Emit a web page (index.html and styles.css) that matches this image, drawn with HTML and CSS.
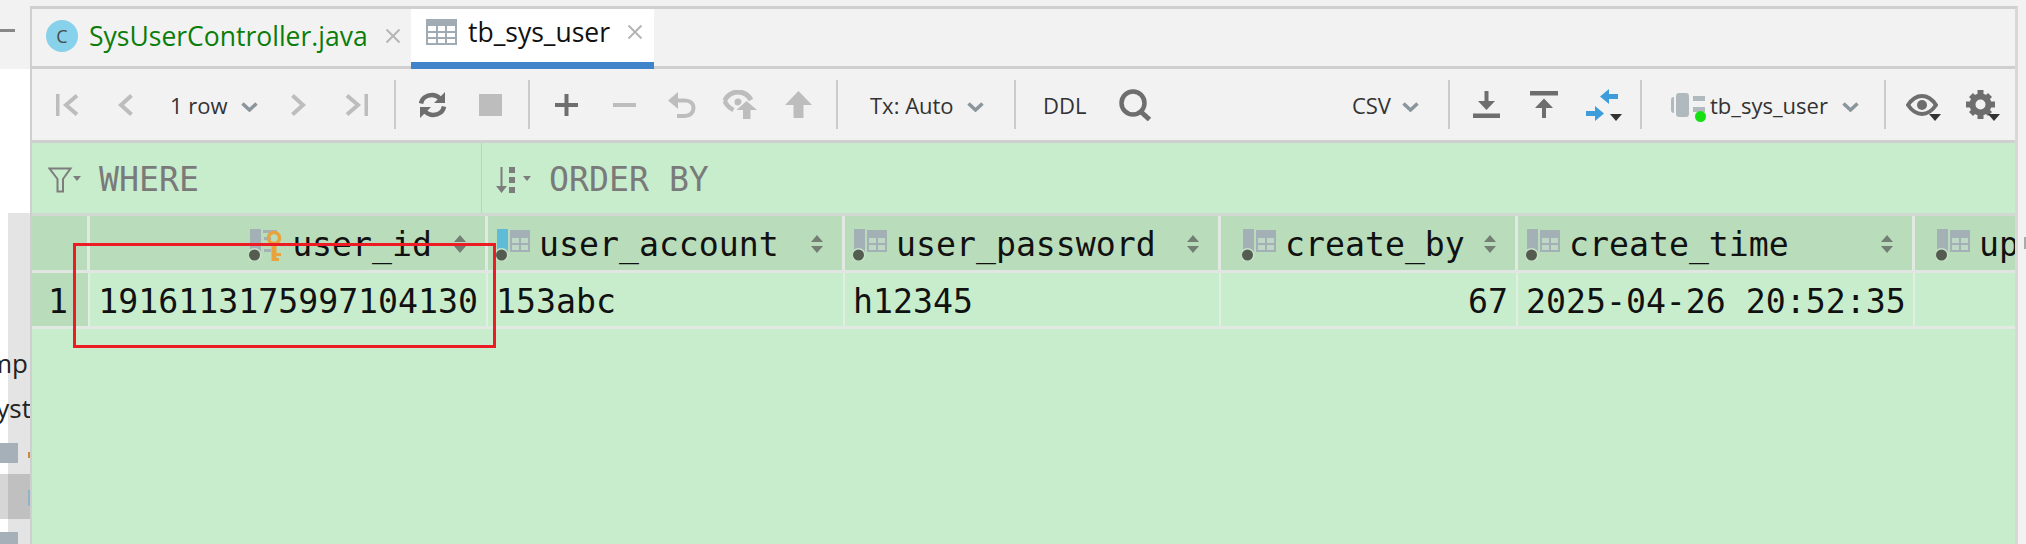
FILE: index.html
```html
<!DOCTYPE html>
<html lang="en">
<head>
    <meta charset="UTF-8" />
    <title>tb_sys_user</title>
    <link rel="stylesheet" href="styles.css">
</head>
<body>
    <svg class="defs" width="0" height="0">
        <symbol id="col-icon" viewBox="0 0 34 32">
            <rect x="1" y="0" width="11" height="24" class="col-bar"/>
            <path d="M14 1h20v22H14z" fill="#a3b0b5"/>
            <path d="M16 9h7v5h-7zM25 9h7v5h-7zM16 16h7v5h-7zM25 16h7v5h-7z" fill="#bfd8c6"/>
            <circle cx="5.500" cy="26" r="7" fill="#c8e3cb"/>
            <circle cx="5.500" cy="26" r="5.500" fill="#545c4f"/>
        </symbol>
        <symbol id="close" viewBox="0 0 16 16">
            <path d="M1.500 1.500l13 13M14.500 1.500l-13 13" stroke="#b5b5b5" stroke-width="2" fill="none"/>
        </symbol>
        <symbol id="chev" viewBox="0 0 17 10">
            <path d="M1.500 1.500l7 6.500 7-6.500" stroke="#8b959c" stroke-width="3.500" fill="none"/>
        </symbol>
        <symbol id="sort" viewBox="0 0 12 18">
            <path d="M6 0l6 7H0zM0 11h12l-6 7z" fill="#727f72"/>
        </symbol>
    </svg>

    <div class="app">
        <aside class="side">
            <div class="side-top"><span class="side-dash"></span></div>
            <div class="side-blank"></div>
            <div class="side-list">
                <div class="side-text side-text-a">mp</div>
                <div class="side-text side-text-b">yst</div>
                <div class="side-node side-node-a"><span class="fleck fleck-orange"></span></div>
                <div class="side-selected"><span class="fleck fleck-blue"></span></div>
                <div class="side-node side-node-b"></div>
            </div>
        </aside>

        <main class="editor">
            <div class="tabs">
                <div class="tab">
                    <span class="class-icon">C</span>
                    <span class="tab-name tab-java">SysUserController.java</span>
                    <svg class="tab-close"><use href="#close"/></svg>
                </div>
                <div class="tab tab-active">
                    <svg class="table-icon" viewBox="0 0 31 26">
                        <rect width="31" height="26" fill="#a0abb4"/>
                        <path d="M2 7h8v5H2zM12 7h7v5h-7zM21 7h8v5h-8zM2 14h8v4H2zM12 14h7v4h-7zM21 14h8v4h-8zM2 20h8v4H2zM12 20h7v4h-7zM21 20h8v4h-8z" fill="#fff"/>
                    </svg>
                    <span class="tab-name">tb_sys_user</span>
                    <svg class="tab-close"><use href="#close"/></svg>
                </div>
            </div>

            <div class="toolbar">
                <div class="tool"><svg width="23" height="22" viewBox="0 0 23 22"><rect width="3.500" height="22" fill="#bdbdbd"/><path d="M21 1.500L10 11l11 9.500" class="ln-off"/></svg></div>
                <div class="tool"><svg width="15" height="22" viewBox="0 0 15 22"><path d="M13.500 1.500L3 11l10.500 9.500" class="ln-off"/></svg></div>
                <div class="picker picker-rows"><span>1 row</span><svg class="chev"><use href="#chev"/></svg></div>
                <div class="tool"><svg width="15" height="22" viewBox="0 0 15 22"><path d="M1.500 1.500L12 11 1.500 20.500" class="ln-off"/></svg></div>
                <div class="tool"><svg width="23" height="22" viewBox="0 0 23 22"><rect x="19.500" width="3.500" height="22" fill="#bdbdbd"/><path d="M2 1.500L13 11 2 20.500" class="ln-off"/></svg></div>
                <span class="sep"></span>
                <div class="tool"><svg width="29" height="26" viewBox="0 0 29 26"><path d="M3 11.500C4 6 8.500 3 14 3c3.500 0 6 1.500 8 3.500" class="ln-on"/><path d="M26 14.500C25 20 20.500 23 15 23c-3.500 0-6-1.500-8-3.500" class="ln-on"/><path d="M27 0v11H16zM2 26V15h11z" fill="#6e6e6e"/></svg></div>
                <div class="tool"><svg width="23" height="22"><rect width="23" height="22" fill="#bdbdbd"/></svg></div>
                <span class="sep"></span>
                <div class="tool"><svg width="23" height="22" viewBox="0 0 23 22"><path d="M9.500 0h4v9H23v4h-9.500v9h-4v-9H0V9h9.500z" fill="#6e6e6e"/></svg></div>
                <div class="tool"><svg width="23" height="4"><rect width="23" height="4" fill="#bdbdbd"/></svg></div>
                <div class="tool"><svg width="28" height="26" viewBox="0 0 28 26"><path d="M0 8.500L10 0v17z" fill="#bdbdbd"/><path d="M8 8.500h9c5 0 8.500 3 8.500 7.500s-3.500 8-8.500 8H9" class="ln-off"/></svg></div>
                <div class="tool"><svg width="35" height="29" viewBox="0 0 35 29"><path d="M1.500 11C4 5.500 9.500 2 15 2s10 2.500 13 8" stroke="#bdbdbd" stroke-width="5" fill="none"/><path d="M1.500 11c2 4 5 7 9 9" stroke="#bdbdbd" stroke-width="4.500" fill="none"/><circle cx="15" cy="12" r="3.500" fill="#bdbdbd"/><path d="M23 9l12 11h-7v9h-10v-9h-7z" fill="#f2f2f2"/><path d="M23.500 11L34 20h-6.500v9h-7.500v-9h-6.500z" fill="#bdbdbd"/></svg></div>
                <div class="tool"><svg width="27" height="27" viewBox="0 0 27 27"><path d="M13.500 0L27 14h-8.500v13h-10V14H0z" fill="#bdbdbd"/></svg></div>
                <span class="sep"></span>
                <div class="picker picker-tx"><span>Tx: Auto</span><svg class="chev"><use href="#chev"/></svg></div>
                <span class="sep"></span>
                <div class="picker picker-ddl"><span>DDL</span></div>
                <div class="tool"><svg width="33" height="32" viewBox="0 0 33 32"><circle cx="14" cy="14" r="11.500" stroke="#6e6e6e" stroke-width="4.500" fill="none"/><path d="M21 22l9.500 8.500" stroke="#6e6e6e" stroke-width="5" fill="none"/></svg></div>

                <div class="picker picker-csv"><span>CSV</span><svg class="chev"><use href="#chev"/></svg></div>
                <span class="sep"></span>
                <div class="tool"><svg width="27" height="27" viewBox="0 0 27 27"><rect y="22.500" width="27" height="4.500" fill="#6e6e6e"/><path d="M11.500 0h4v10H22l-8.500 9L5 10h6.500z" fill="#6e6e6e"/></svg></div>
                <div class="tool"><svg width="28" height="27" viewBox="0 0 28 27"><rect width="28" height="4.500" fill="#6e6e6e"/><path d="M14 7.500l9 9.500h-7v10h-4V17H5z" fill="#6e6e6e"/></svg></div>
                <div class="tool tool-menu"><svg width="32" height="32" viewBox="0 0 32 32"><path d="M32 5h-9V0l-9 7.500 9 7.500v-5h9zM0 22h9v-5l9 7.500L9 32v-5H0z" fill="#3d9ddb"/></svg><span class="drop drop-compare"></span></div>
                <span class="sep"></span>
                <div class="picker picker-db">
                    <span class="db-icon">
                        <svg width="34" height="24" viewBox="0 0 34 24"><path d="M0 7c0-2 1-3 3-3v16c-2 0-3-1-3-3zM5 3c0-2 1-3 3-3h7c2 0 3 1 3 3v18c0 2-1 3-3 3H8c-2 0-3-1-3-3z" fill="#b0b9be"/><path d="M22 3h12v5H22zM22 14h12v5H22z" fill="#b0b9be"/></svg>
                        <span class="db-dot"></span>
                    </span>
                    <span>tb_sys_user</span>
                    <svg class="chev"><use href="#chev"/></svg>
                </div>
                <span class="sep"></span>
                <div class="tool tool-menu"><svg width="32" height="22" viewBox="0 0 32 22"><path d="M2 11C6 5 10.500 2 16 2s10 3 14 9c-4 6-8.500 9-14 9S6 17 2 11z" stroke="#6e6e6e" stroke-width="4" fill="none"/><circle cx="16" cy="11" r="5" fill="#6e6e6e"/></svg><span class="drop drop-eye"></span></div>
                <div class="tool tool-menu"><svg width="29" height="29" viewBox="0 0 29 29"><circle cx="14.500" cy="14.500" r="8" stroke="#6e6e6e" stroke-width="6" fill="none"/><path d="M11.500 0h6v6h-6zM11.500 23h6v6h-6zM0 11.500h6v6H0zM23 11.500h6v6h-6zM3 7l4-4 4 4-4 4zM18 7l4-4 4 4-4 4zM3 22l4-4 4 4-4 4zM18 22l4-4 4 4-4 4z" fill="#6e6e6e"/></svg><span class="drop drop-gear"></span></div>
            </div>

            <div class="results">
                <div class="filters">
                    <div class="filter filter-where">
                        <svg class="filter-icon" width="33" height="26" viewBox="0 0 33 26"><path d="M1.500 1.500h21L15 12v12.500H9.500V12z" stroke="#7d7d7d" stroke-width="2" fill="none"/><path d="M25 9h8l-4 5z" fill="#7d7d7d"/></svg>
                        <span>WHERE</span>
                    </div>
                    <div class="filter filter-order">
                        <svg class="filter-icon" width="35" height="26" viewBox="0 0 35 26"><path d="M4.500 0h2v19H11l-5.500 7L0 19h4.500z" fill="#7d7d7d"/><path d="M13 0h6v6h-6zM13 10h6v6h-6zM13 20h6v6h-6z" fill="#7d7d7d"/><path d="M27 9h8l-4 5z" fill="#7d7d7d"/></svg>
                        <span>ORDER BY</span>
                    </div>
                </div>

                <div class="grid-wrap">
                    <div class="grid-row grid-head">
                        <div class="cell cell-num"></div>
                        <div class="cell cell-right">
                            <svg class="col-icon" viewBox="0 0 34 32">
                                <rect x="1" y="0" width="11" height="24" fill="#a3b0b5"/>
                                <path d="M14 1h14v3H14zM15 8h7v3h-7zM15 14h7v3h-7zM15 20h7v3h-7z" fill="#a3b0b5"/>
                                <circle cx="5.500" cy="26" r="7" fill="#c8e3cb"/>
                                <circle cx="5.500" cy="26" r="5.500" fill="#545c4f"/>
                                <circle cx="25" cy="9" r="5.500" stroke="#e8a33d" stroke-width="3.500" fill="none"/>
                                <path d="M22.500 14h5v18h-5zM27 24h5v3h-5zM27 29h3v3h-3z" fill="#e8a33d"/>
                            </svg>
                            <span class="col-name">user_id</span>
                            <svg class="sort sort-id"><use href="#sort"/></svg>
                        </div>
                        <div class="cell">
                            <svg class="col-icon col-blue"><use href="#col-icon"/></svg>
                            <span class="col-name">user_account</span>
                            <svg class="sort"><use href="#sort"/></svg>
                        </div>
                        <div class="cell">
                            <svg class="col-icon"><use href="#col-icon"/></svg>
                            <span class="col-name">user_password</span>
                            <svg class="sort"><use href="#sort"/></svg>
                        </div>
                        <div class="cell cell-wide-pad">
                            <svg class="col-icon"><use href="#col-icon"/></svg>
                            <span class="col-name">create_by</span>
                            <svg class="sort"><use href="#sort"/></svg>
                        </div>
                        <div class="cell">
                            <svg class="col-icon"><use href="#col-icon"/></svg>
                            <span class="col-name">create_time</span>
                            <svg class="sort"><use href="#sort"/></svg>
                        </div>
                        <div class="cell cell-last cell-wide-pad">
                            <svg class="col-icon"><use href="#col-icon"/></svg>
                            <span class="col-name">up</span>
                        </div>
                    </div>

                    <div class="grid-row grid-data">
                        <div class="cell cell-num">1</div>
                        <div class="cell cell-right">1916113175997104130</div>
                        <div class="cell">153abc</div>
                        <div class="cell">h12345</div>
                        <div class="cell cell-right">67</div>
                        <div class="cell">2025-04-26 20:52:35</div>
                        <div class="cell cell-last"></div>
                    </div>

                    <div class="mark"></div>
                </div>
            </div>
        </main>

        <div class="gutter"><span class="gutter-fleck"></span></div>
    </div>
</body>
</html>
```

FILE: styles.css
```css
* {
    box-sizing: border-box;
}

html,
body {
    margin: 0;
    padding: 0;
    height: 544px;
    overflow: hidden;
    background: #f2f2f2;
}

body {
    font-family: "Open Sans", sans-serif;
    color: #222;
}

.defs {
    position: absolute;
}

.app {
    display: flex;
    height: 544px;
}

/* left project tree, mostly hidden */
.side {
    width: 30px;
    flex: none;
    display: flex;
    flex-direction: column;
    background: #fff;
}

.side-top {
    height: 69px;
    background: #f2f2f2;
    display: flex;
    align-items: center;
    padding-bottom: 8px;
}

.side-dash {
    display: block;
    width: 15px;
    height: 3px;
    background: #888;
}

.side-blank {
    height: 144px;
}

.side-list {
    flex: 1;
    background: linear-gradient(to right, #fff 8px, #e4e4e4 8px);
    display: flex;
    flex-direction: column;
    overflow: hidden;
}

.side-text {
    font-size: 26px;
    line-height: 34px;
    white-space: nowrap;
    display: flex;
    justify-content: flex-end;
}

.side-text-a {
    margin-top: 133px;
    padding-right: 2px;
}

.side-text-b {
    margin-top: 11px;
    margin-right: -1px;
}

.side-node {
    position: relative;
    height: 20px;
    width: 18px;
    background: #a6b0b8;
}

.side-node-a {
    margin-top: 18px;
}

.side-node-b {
    margin-top: 13px;
    height: 12px;
}

.side-selected {
    position: relative;
    margin-top: 11px;
    height: 45px;
    background: linear-gradient(to right, #d6d6d6 8px, #c0c0c0 8px);
}

.fleck {
    position: absolute;
    right: 0;
    width: 2px;
}

.fleck-orange {
    left: 28px;
    top: 9px;
    height: 6px;
    background: #c98a3c;
}

.fleck-blue {
    top: 16px;
    height: 16px;
    background: #8fb4c9;
}

/* editor */
.editor {
    flex: 1;
    min-width: 0;
    margin-top: 6px;
    border-top: 3px solid #cfcfcf;
    border-left: 2px solid #cfcfcf;
    border-right: 3px solid #d8d8d8;
    display: flex;
    flex-direction: column;
}

.tabs {
    height: 60px;
    flex: none;
    display: flex;
    padding-left: 14px;
    background: #f2f2f2;
    border-bottom: 3px solid #cfcfcf;
}

.tab {
    display: flex;
    align-items: center;
    height: 57px;
    width: 365px;
    padding-bottom: 4px;
    font-size: 26.500px;
}

.tab-active {
    width: 243px;
    height: 60px;
    padding: 0 0 7px 15px;
    background: #fff;
    border-bottom: 7px solid #3f84cb;
}

.class-icon {
    width: 32px;
    height: 32px;
    flex: none;
    border-radius: 50%;
    background: #87d1ea;
    color: #4a4a4a;
    font-size: 18px;
    line-height: 32px;
    text-align: center;
    margin-right: 11px;
}

.table-icon {
    width: 31px;
    height: 26px;
    margin-right: 11px;
}

.tab-name {
    white-space: nowrap;
    color: #111;
}

.tab-java {
    color: #0a7d0a;
}

.tab-close {
    width: 16px;
    height: 16px;
    margin-left: 17px;
}

.toolbar {
    height: 71px;
    flex: none;
    display: flex;
    align-items: center;
    padding: 0 6px;
    background: #f2f2f2;
    font-size: 22px;
}

.tool {
    position: relative;
    width: 58px;
    height: 40px;
    flex: none;
    display: flex;
    align-items: center;
    justify-content: center;
}

.ln-off {
    stroke: #bdbdbd;
    stroke-width: 4;
    fill: none;
}

.ln-on {
    stroke: #6e6e6e;
    stroke-width: 4.500;
    fill: none;
}

.sep {
    width: 2px;
    height: 49px;
    flex: none;
    margin: 0 7px 0 9px;
    background: #cbcbcb;
}

.picker {
    display: flex;
    align-items: center;
    flex: none;
    white-space: nowrap;
    color: #333;
}

.chev {
    width: 17px;
    height: 10px;
    flex: none;
    margin-top: 5px;
}

.picker-rows {
    width: 115px;
    padding-left: 16px;
    justify-content: space-between;
    padding-right: 11px;
}

.picker-tx {
    padding-left: 25px;
    width: 160px;
    justify-content: space-between;
    padding-right: 21px;
}

.picker-ddl {
    padding-left: 20px;
    width: 83px;
}

.picker-csv {
    margin-left: auto;
    gap: 11px;
    padding-right: 20px;
}

.picker-db {
    width: 226px;
    padding-left: 22px;
    padding-right: 16px;
}

.picker-db .chev {
    margin-left: auto;
}

.db-icon {
    position: relative;
    display: block;
    width: 34px;
    height: 24px;
    margin-right: 5px;
}

.db-dot {
    position: absolute;
    left: 24px;
    top: 18px;
    width: 11px;
    height: 11px;
    border-radius: 50%;
    background: #14e014;
}

/* small dropdown markers sit over their tool icons */
.drop {
    position: absolute;
    width: 0;
    height: 0;
    border-left: 6px solid transparent;
    border-right: 6px solid transparent;
    border-top: 7px solid #333;
}

.drop-compare {
    left: 37px;
    top: 29px;
}

.drop-eye {
    left: 36px;
    top: 29px;
}

.drop-gear {
    left: 37px;
    top: 29px;
}

/* results */
.results {
    flex: 1;
    min-height: 0;
    background: #c8edcc;
    border-top: 3px solid #cfcfcf;
    display: flex;
    flex-direction: column;
    font-family: "DejaVu Sans Mono", monospace;
    font-size: 33.200px;
    overflow: hidden;
}

.filters {
    height: 73px;
    flex: none;
    display: flex;
    border-bottom: 3px solid #d2d8d2;
    color: #7a7a7a;
}

.filter {
    display: flex;
    align-items: center;
    padding-top: 3px;
}

.filter-where {
    width: 450px;
    padding-left: 16px;
    border-right: 1px solid #b5d6b9;
}

.filter-order {
    padding-left: 14px;
}

.filter-icon {
    margin-right: 18px;
    flex: none;
}

.grid-wrap {
    position: relative;
    flex: 1;
}

.grid-row {
    display: grid;
    grid-template-columns: 58px 398px 357px 376px 297px 397px 1fr;
}

.grid-head {
    height: 57px;
    border-bottom: 3px solid #e2e6e2;
}

.grid-head .cell {
    height: 54px;
    background: #b9ddbb;
    border-right: 3px solid #e2e8e2;
    justify-content: flex-start;
    padding-left: 8px;
    padding-right: 19px;
    padding-top: 2px;
    color: #111;
}

.grid-head .cell-right {
    justify-content: flex-end;
}

.grid-head .cell-wide-pad {
    padding-left: 21px;
}

.grid-head .cell-last {
    border-right: 0;
    padding-right: 0;
    overflow: hidden;
}

.col-icon {
    width: 34px;
    height: 32px;
    flex: none;
    margin-right: 9px;
    margin-top: 2px;
    --bar: #a3b0b5;
}

.col-bar {
    fill: var(--bar);
}

.col-blue {
    --bar: #5fbcd9;
}

.col-name {
    white-space: nowrap;
}

.sort {
    width: 12px;
    height: 18px;
    flex: none;
    margin-left: auto;
}

.sort-id {
    margin-left: 22px;
}

.grid-data {
    height: 56px;
    border-bottom: 3px solid #e2e8e2;
}

.cell {
    display: flex;
    align-items: center;
    min-width: 0;
    height: 53px;
    padding: 3px 8px 0;
    border-right: 2px solid #e2eee2;
    color: #111;
    white-space: nowrap;
}

.cell-right {
    justify-content: flex-end;
}

.cell-num {
    background: #b9ddbb;
    justify-content: flex-end;
    padding-right: 20px;
}

.cell-last {
    border-right: 0;
}

/* red annotation drawn over the grid */
.mark {
    position: absolute;
    left: 41px;
    top: 27px;
    width: 423px;
    height: 105px;
    border: 3px solid #ed1c24;
}

.gutter {
    width: 8px;
    flex: none;
    position: relative;
    background: #f2f2f2;
}

.gutter-fleck {
    position: absolute;
    left: 6px;
    top: 237px;
    width: 2px;
    height: 12px;
    background: #aaa;
}
```
